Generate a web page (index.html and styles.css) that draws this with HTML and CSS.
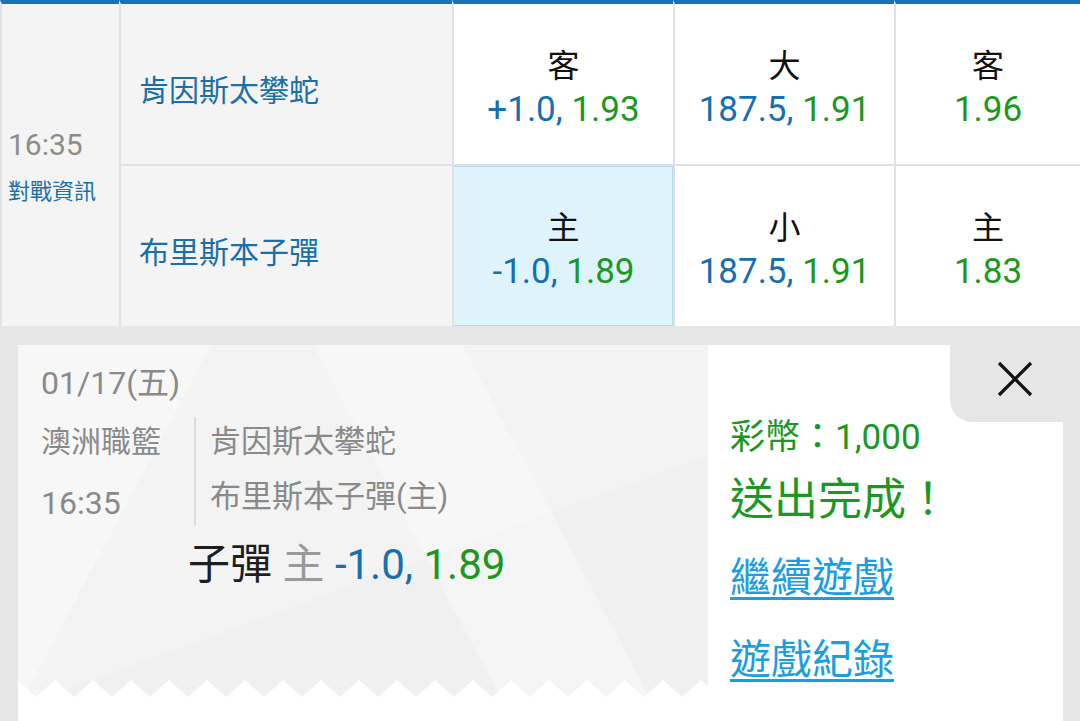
FILE: index.html
```html
<!DOCTYPE html>
<html>
<head>
    <meta charset="UTF-8">
    <title>投注單</title>
    <link rel="stylesheet" href="styles.css">
</head>
<body>
    <div class="board">
        <div class="cell time-cell">
            <div class="time">16:35</div>
            <div class="info">對戰資訊</div>
        </div>
        <div class="cell team top">肯因斯太攀蛇</div>
        <div class="cell odds top">
            <span class="pick">客</span>
            <span class="price"><span class="hc">+1.0,</span> <span class="rate">1.93</span></span>
        </div>
        <div class="cell odds top">
            <span class="pick">大</span>
            <span class="price"><span class="hc">187.5,</span> <span class="rate">1.91</span></span>
        </div>
        <div class="cell odds top">
            <span class="pick">客</span>
            <span class="price"><span class="rate">1.96</span></span>
        </div>

        <div class="cell team">布里斯本子彈</div>
        <div class="cell odds selected">
            <span class="pick">主</span>
            <span class="price"><span class="hc">-1.0,</span> <span class="rate">1.89</span></span>
        </div>
        <div class="cell odds">
            <span class="pick">小</span>
            <span class="price"><span class="hc">187.5,</span> <span class="rate">1.91</span></span>
        </div>
        <div class="cell odds">
            <span class="pick">主</span>
            <span class="price"><span class="rate">1.83</span></span>
        </div>
    </div>

    <div class="slip">
        <div class="panel">
            <div class="ticket">
                <div class="date">01/17(五)</div>
                <div class="match">
                    <div class="league">
                        <div class="league-name">澳洲職籃</div>
                        <div class="league-time">16:35</div>
                    </div>
                    <div class="teams">
                        <div class="away">肯因斯太攀蛇</div>
                        <div class="home">布里斯本子彈(主)</div>
                    </div>
                </div>
                <div class="bet">
                    <span class="bet-team">子彈</span>
                    <span class="bet-side">主</span>
                    <span class="hc">-1.0,</span> <span class="rate">1.89</span>
                </div>
                <svg class="zigzag" width="690" height="17">
                    <defs>
                        <pattern id="teeth" x="18" width="38" height="17" patternUnits="userSpaceOnUse">
                            <path d="M0 17 L19 0 L38 17 Z" fill="#fff"/>
                        </pattern>
                    </defs>
                    <rect width="690" height="17" fill="url(#teeth)"/>
                </svg>
            </div>

            <div class="result">
                <div class="coins">彩幣：1,000</div>
                <div class="done">送出完成！</div>
                <a class="link first" href="#">繼續遊戲</a>
                <a class="link" href="#">遊戲紀錄</a>
            </div>

            <div class="close">
                <svg width="36" height="36" viewBox="0 0 36 36">
                    <path d="M2 2 L34 34 M34 2 L2 34" stroke="#111" stroke-width="3.2" fill="none"/>
                </svg>
            </div>
        </div>
    </div>
</body>
</html>
```

FILE: styles.css
```css
body {
    margin: 0;
    font-family: Roboto, "Noto Sans CJK TC", sans-serif;
    background: #e6e6e6;
    width: 1080px;
    height: 721px;
    overflow: hidden;
}

/* odds board */
.board {
    display: grid;
    grid-template-columns: 119px 333px 221px 221px 1fr;
    grid-template-rows: 166px 160px;
    background: #fff;
}

.cell {
    box-sizing: border-box;
    border-left: 2px solid #dde2e6;
}

.top {
    border-top: 4px solid #1a72b6;
    border-bottom: 2px solid #dde2e6;
}

.time-cell {
    grid-row: span 2;
    border-top: 4px solid #1a72b6;
    background: #f4f4f4;
    display: flex;
    flex-direction: column;
    justify-content: center;
    padding: 4px 0 0 6px;
}

.time {
    font-size: 30px;
    line-height: 36px;
    color: #8c8c8c;
}

.info {
    font-size: 22px;
    line-height: 30px;
    margin-top: 14px;
    color: #1b6fa8;
}

.team {
    background: #f4f4f4;
    display: flex;
    align-items: center;
    padding: 8px 0 0 18px;
    font-size: 30px;
    color: #1b6fa8;
}

.odds {
    display: flex;
    flex-direction: column;
    align-items: center;
    justify-content: center;
    padding-top: 8px;
}

.selected {
    background: #def3fc;
    box-shadow: inset -1px -1px 0 #b9d9e8, inset 0 1px 0 #b9d9e8;
}

.pick {
    font-size: 32px;
    line-height: 44px;
    color: #111;
}

.price {
    font-size: 35px;
    line-height: 44px;
}

.hc {
    color: #1670b0;
}

.rate {
    color: #1a981f;
}

/* bet slip */
.slip {
    box-sizing: border-box;
    height: 395px;
    padding: 19px 17px 0 18px;
}

.panel {
    position: relative;
    display: flex;
    height: 376px;
    background: #fff;
}

.ticket {
    width: 690px;
    height: 352px;
    display: flex;
    flex-direction: column;
    padding-left: 23px;
    box-sizing: border-box;
    color: #8a8a8a;
    background:
        linear-gradient(118deg, rgba(255,255,255,0.35) 0 22%, transparent 22%),
        linear-gradient(62deg, transparent 0 55%, rgba(255,255,255,0.3) 55% 72%, transparent 72%),
        linear-gradient(160deg, transparent 0 60%, rgba(0,0,0,0.012) 60%),
        #f3f3f3;
}

.date {
    font-size: 32px;
    line-height: 38px;
    margin-top: 19px;
}

.match {
    display: flex;
    margin-top: 15px;
}

.league {
    width: 153px;
    padding-top: 3px;
    font-size: 30px;
}

.league-name,
.league-time,
.away,
.home {
    line-height: 44px;
}

.league-time {
    margin-top: 17px;
    font-size: 32px;
}

.teams {
    border-left: 2px solid #dcdcdc;
    padding: 3px 0 0 14px;
    font-size: 31px;
}

.home {
    margin-top: 11px;
}

.bet {
    margin: 15px 0 0 147px;
    font-size: 42px;
    line-height: 50px;
}

.bet-team {
    color: #1e1e1e;
}

.bet-side {
    color: #9a9a9a;
}

.zigzag {
    display: block;
    margin-top: auto;
    margin-left: -23px;
}

.result {
    flex: 1;
    padding: 74px 0 0 22px;
    display: flex;
    flex-direction: column;
    align-items: flex-start;
}

.coins {
    font-size: 35px;
    line-height: 38px;
    color: #1a981f;
}

.done {
    font-size: 44px;
    line-height: 50px;
    margin-top: 18px;
    color: #1a981f;
}

.link {
    font-size: 41px;
    line-height: 50px;
    color: #1b9de2;
    text-decoration: underline;
    text-decoration-thickness: 3px;
    text-underline-offset: 5px;
    margin-top: 32px;
}

.link.first {
    margin-top: 28px;
}

.close {
    position: absolute;
    top: 0;
    right: 0;
    width: 113px;
    height: 77px;
    background: #e6e6e6;
    border-bottom-left-radius: 22px;
    box-sizing: border-box;
    padding: 16px 0 0 47px;
}

.close svg {
    display: block;
}
```
